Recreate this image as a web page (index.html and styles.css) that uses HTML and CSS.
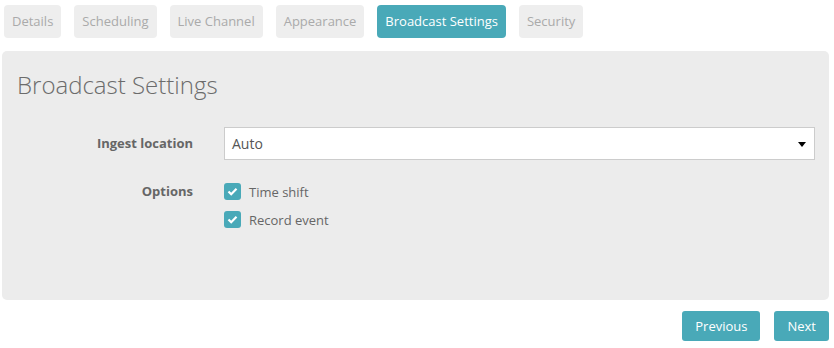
FILE: index.html
```html
<!DOCTYPE html>
<html>
<head>
<meta charset="utf-8">
<link rel="stylesheet" href="styles.css">
</head>
<body>
<nav class="tabs">
  <span class="tab">Details</span>
  <span class="tab">Scheduling</span>
  <span class="tab">Live Channel</span>
  <span class="tab">Appearance</span>
  <span class="tab active">Broadcast Settings</span>
  <span class="tab">Security</span>
</nav>
<section class="panel">
  <h1 class="title">Broadcast Settings</h1>
  <div class="form">
    <div class="row">
      <label class="label">Ingest location</label>
      <div class="select">
        <span>Auto</span>
        <svg class="caret" width="8" height="5" viewBox="0 0 8 5"><path d="M0 0H8L4 5Z" fill="#000"/></svg>
      </div>
    </div>
    <div class="row options">
      <label class="label">Options</label>
      <div class="checks">
        <div class="check"><span class="box"><svg width="11" height="9" viewBox="0 0 11 9"><path d="M1.5 4.5L4.2 7.2L9.5 1.8" fill="none" stroke="#fff" stroke-width="2.2"/></svg></span>Time shift</div>
        <div class="check"><span class="box"><svg width="11" height="9" viewBox="0 0 11 9"><path d="M1.5 4.5L4.2 7.2L9.5 1.8" fill="none" stroke="#fff" stroke-width="2.2"/></svg></span>Record event</div>
      </div>
    </div>
  </div>
</section>
<div class="actions">
  <button class="btn">Previous</button>
  <button class="btn">Next</button>
</div>
</body>
</html>
```
FILE: styles.css
```css
* { box-sizing: border-box; }
body {
  margin: 0;
  font-family: "Open Sans", sans-serif;
  font-size: 13px;
  color: #666;
  background: #fff;
}
.tabs {
  display: flex;
  gap: 13px;
  padding: 5px 0 0 4px;
}
.tab {
  height: 33px;
  line-height: 33px;
  padding: 0 8px;
  background: #eee;
  color: #aaa;
  border-radius: 4px;
  font-size: 13px;
}
.tab.active {
  background: #49a9b8;
  color: #fff;
}
.panel {
  margin: 13px 5px 0 2px;
  height: 249px;
  background: #ececec;
  border-radius: 5px;
  padding: 18px 14px 0 15px;
}
.title {
  margin: 0;
  font-size: 24px;
  font-weight: 300;
  color: #6b6b6b;
  line-height: 32px;
}
.form {
  margin-top: 26px;
}
.row {
  display: grid;
  grid-template-columns: 176px 1fr;
  column-gap: 31px;
}
.label {
  text-align: right;
  font-weight: 700;
  color: #666;
  line-height: 33px;
}
.select {
  height: 33px;
  background: #fff;
  border: 1px solid #ccc;
  display: flex;
  align-items: center;
  justify-content: space-between;
  padding: 0 8px 0 7px;
  font-size: 14px;
  color: #555;
}
.caret { margin-top: 1px; }
.options {
  margin-top: 23px;
}
.options .label {
  line-height: 17px;
}
.checks {
  display: flex;
  flex-direction: column;
  gap: 11px;
}
.check {
  display: flex;
  align-items: center;
  gap: 8px;
  height: 17px;
  color: #666;
}
.box {
  width: 17px;
  height: 17px;
  border-radius: 3px;
  background: #49a9b8;
  display: flex;
  align-items: center;
  justify-content: center;
}
.actions {
  display: flex;
  justify-content: flex-end;
  gap: 14px;
  margin: 11px 5px 0 0;
}
.btn {
  height: 30px;
  border: 0;
  border-radius: 3px;
  background: #49a9b8;
  color: #fff;
  font-family: "Open Sans", sans-serif;
  font-size: 13px;
  padding: 0 13px;
}
```
